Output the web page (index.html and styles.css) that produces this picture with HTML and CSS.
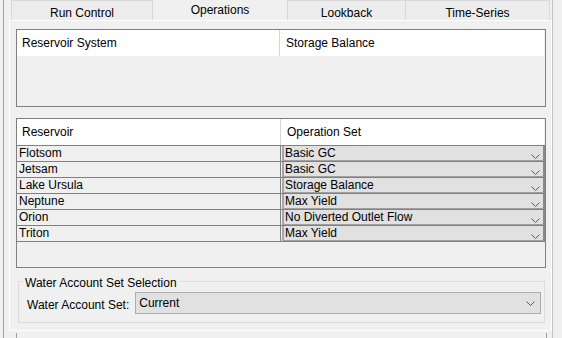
FILE: index.html
```html
<!DOCTYPE html>
<html lang="en">
<head>
    <meta charset="UTF-8">
    <title>Operations</title>
    <link rel="stylesheet" href="styles.css">
</head>
<body>

<div class="frame">
    <!-- tab strip -->
    <div class="tabs">
        <div class="tab tab-run">Run Control</div>
        <div class="tab tab-ops selected">Operations</div>
        <div class="tab tab-look">Lookback</div>
        <div class="tab tab-time">Time-Series</div>
    </div>

    <div class="panel">
        <div class="box box-system">
            <div class="head head-system">
                <div class="head-cell">Reservoir System</div>
                <div class="head-cell">Storage Balance</div>
            </div>
        </div>

        <div class="box box-reservoirs">
            <div class="head head-reservoirs">
                <div class="head-cell">Reservoir</div>
                <div class="head-cell">Operation Set</div>
            </div>
            <div class="rows" id="rows"></div>
        </div>

        <fieldset class="group">
            <legend>Water Account Set Selection</legend>
            <div class="wa-row">
                <span class="wa-label">Water Account Set:</span>
                <div class="wa-combo">
                    <span>Current</span>
                    <svg class="chevron" width="9" height="5" viewBox="0 0 9 5"><polyline points="0.5,0.5 4.5,4.5 8.5,0.5"/></svg>
                </div>
            </div>
        </fieldset>
    </div>

    <div class="next-box"></div>
</div>

<script>
    // reservoir -> operation set
    const reservoirs = [
        ["Flotsom", "Basic GC"],
        ["Jetsam", "Basic GC"],
        ["Lake Ursula", "Storage Balance"],
        ["Neptune", "Max Yield"],
        ["Orion", "No Diverted Outlet Flow"],
        ["Triton", "Max Yield"]
    ];

    const rows = document.getElementById("rows");
    reservoirs.forEach(r => {
        const row = document.createElement("div");
        row.className = "row";
        row.innerHTML =
            '<div class="name">' + r[0] + '</div>' +
            '<div class="combo"><span>' + r[1] + '</span>' +
            '<svg class="chevron" width="9" height="5" viewBox="0 0 9 5"><polyline points="0.5,0.5 4.5,4.5 8.5,0.5"/></svg></div>';
        rows.appendChild(row);
    });
</script>

</body>
</html>
```

FILE: styles.css
```css
body {
    margin: 0;
    background-color: #f0f0f0;
    font-family: "Liberation Sans", Arial, sans-serif;
    font-size: 12px;
    color: #000;
}

.frame {
    margin-left: 3px;
    width: 548px;
    height: 338px;
    border-left: 1px solid #a0a0a0;
    border-right: 1px solid #c4c4c4;
    overflow: hidden;
}

/* tabs */
.tabs {
    display: flex;
    height: 20px;
    margin-left: 7px;
}
.tab {
    box-sizing: border-box;
    height: 20px;
    padding-top: 5px;
    line-height: 14px;
    text-align: center;
    background-color: #ededed;
    border: 1px solid #d9d9d9;
    border-bottom: none;
}
.tab-run { width: 142px; }
.tab-ops { width: 134px; }
.tab-look { width: 119px; }
.tab-time { width: 144px; border-left: none; }
.tab.selected {
    border: none;
    background-color: #f0f0f0;
    padding-top: 3px;
}

/* main panel */
.panel {
    box-sizing: border-box;
    margin-left: 5px;
    width: 543px;
    height: 311px;
    border: 1px solid #fff;
    padding: 8px 5px 0 6px;
}

.box {
    box-sizing: border-box;
    border: 1px solid #7f7f7f;
}
.box-system { height: 78px; }
.box-reservoirs { height: 150px; margin-top: 11px; }

.head {
    display: grid;
    height: 26px;
    margin-right: 1px;
    background-color: #fff;
}
.head-system { grid-template-columns: 263px 1fr; }
.head-reservoirs { grid-template-columns: 264px 1fr; }
.head-cell {
    padding: 1px 0 0 5px;
    line-height: 25px;
}
.head-cell:first-child {
    border-right: 1px solid #d6d6d6;
}
.head-cell + .head-cell {
    padding-left: 6px;
}

/* reservoir rows */
.rows {
    border-bottom: 1px solid #808080;
}
.row {
    box-sizing: border-box;
    display: grid;
    grid-template-columns: 264px 1fr;
    height: 16px;
    border-top: 1px solid #808080;
}
.name {
    padding-left: 2px;
    line-height: 15px;
    border-right: 1px solid #808080;
}
.combo {
    box-sizing: border-box;
    display: flex;
    justify-content: space-between;
    margin-left: 1px;
    height: 15px;
    padding-left: 1px;
    line-height: 14px;
    background-color: #e1e1e1;
    border-left: 2px solid #a6a6a6;
    border-right: 2px solid #8a8a8a;
    border-bottom: 1px solid #a0a0a0;
}
.combo .chevron {
    align-self: flex-end;
    margin: 0 3px 1px 0;
}
.chevron polyline {
    fill: none;
    stroke: #5a5a5a;
    stroke-width: 1;
}

/* water account group */
.group {
    margin: 4px 1px 0 2px;
    padding: 2px 3px 8px 0;
    border: 1px solid #dcdcdc;
}
.group legend {
    margin-left: 4px;
    padding: 4px 2px 0;
    line-height: 14px;
}
.wa-row {
    display: flex;
    align-items: center;
    gap: 6px;
    padding-left: 8px;
}
.wa-label {
    margin-top: 4px;
}
.wa-combo {
    box-sizing: border-box;
    flex: 1;
    display: flex;
    align-items: center;
    justify-content: space-between;
    height: 22px;
    padding: 0 5px 0 3px;
    background-color: #e1e1e1;
    border: 1px solid #adadad;
}

.next-box {
    margin: 2px 0 0 12px;
    width: 529px;
    height: 10px;
    border-left: 1px solid #a0a0a0;
    border-right: 1px solid #a0a0a0;
}
```
